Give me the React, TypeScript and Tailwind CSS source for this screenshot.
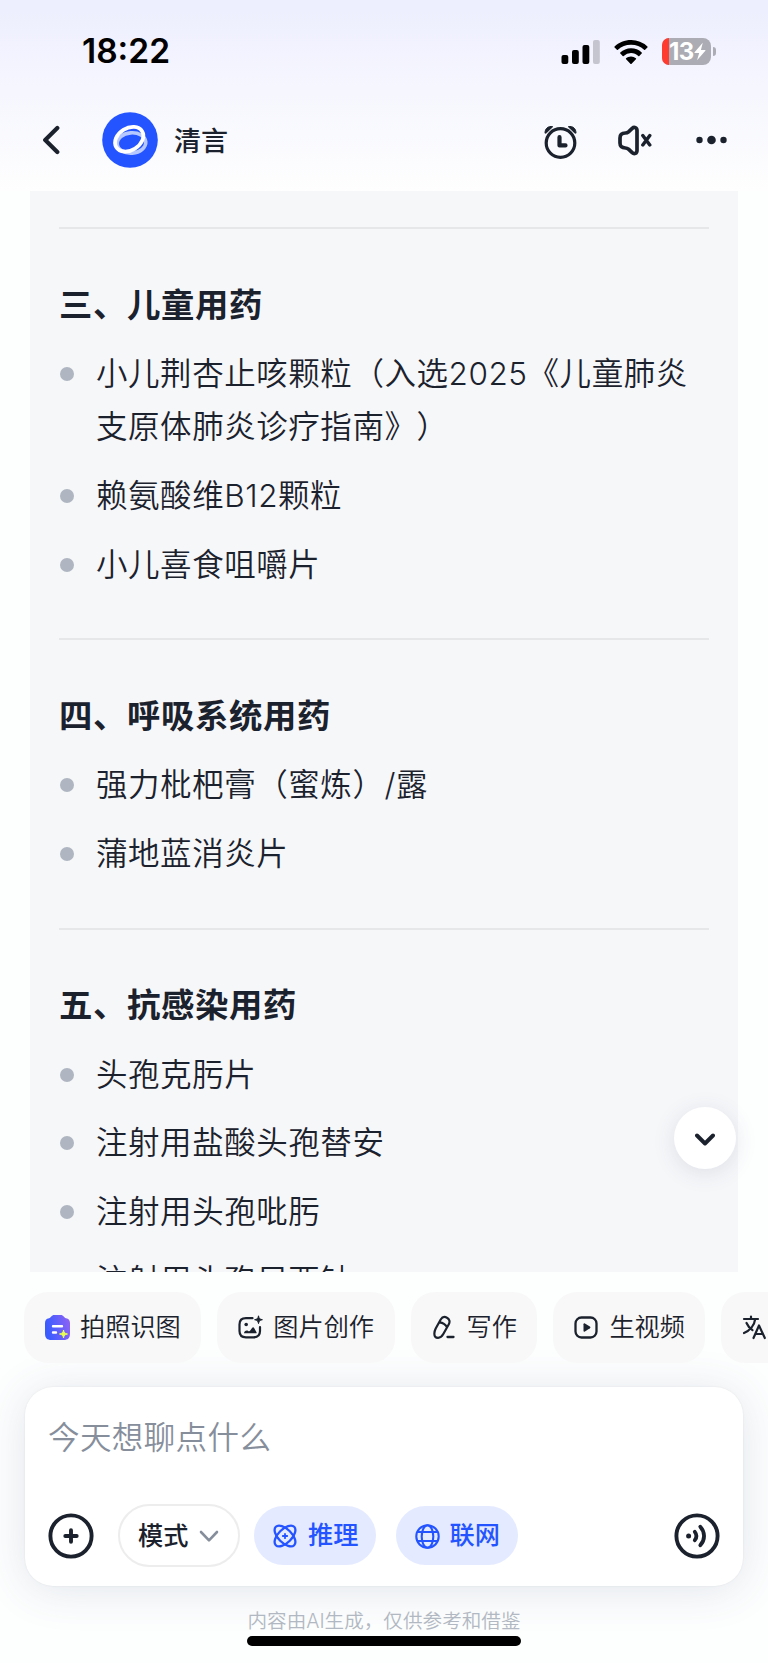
import type { ReactNode } from 'react';

interface Section {
  title: string;
  items: string[];
}

const sections: Section[] = [
  {
    title: '三、儿童用药',
    items: ['小儿荆杏止咳颗粒（入选2025《儿童肺炎支原体肺炎诊疗指南》）', '赖氨酸维B12颗粒', '小儿喜食咀嚼片'],
  },
  {
    title: '四、呼吸系统用药',
    items: ['强力枇杷膏（蜜炼）/露', '蒲地蓝消炎片'],
  },
  {
    title: '五、抗感染用药',
    items: ['头孢克肟片', '注射用盐酸头孢替安', '注射用头孢吡肟', '注射用头孢尼西钠'],
  },
];

function StatusBar() {
  return (
    <div className="flex h-[103px] items-center justify-between pl-[82px] pr-[52px]">
      <span className="text-[33.5px] font-semibold leading-none text-black">18:22</span>
      <div className="flex items-center">
        <svg width="39" height="24" viewBox="0 0 39 24" className="mr-[14px]">
          <rect x="0.500" y="15" width="6.800" height="9" rx="2" fill="#000" />
          <rect x="11" y="10" width="6.800" height="14" rx="2" fill="#000" />
          <rect x="21.500" y="5" width="6.800" height="19" rx="2" fill="#000" />
          <rect x="32" y="0" width="6.800" height="24" rx="2" fill="#c5c5d0" />
        </svg>
        <svg width="34" height="24" viewBox="0 0 34 24" className="mr-[14px]">
          <path d="M17 0C10.6 0 4.800 2.500.6 6.500a.7.7 0 0 0 0 1l2.300 2.300a.7.7 0 0 0 1 0A19 19 0 0 1 17 4.700a19 19 0 0 1 13.100 5.100.7.7 0 0 0 1 0l2.300-2.300a.7.7 0 0 0 0-1A23.700 23.700 0 0 0 17 0Z" />
          <path d="M17 8.300c-4.100 0-7.900 1.600-10.700 4.200a.7.7 0 0 0 0 1l2.400 2.400a.7.7 0 0 0 1 0A10.700 10.700 0 0 1 17 13c2.800 0 5.300 1.100 7.300 2.900a.7.700 0 0 0 1 0l2.400-2.400a.7.7 0 0 0 0-1A15.600 15.600 0 0 0 17 8.300Z" />
          <path d="M17 16.500c-1.900 0-3.600.7-4.900 1.800a.7.7 0 0 0 0 1l4.300 4.400a.8.8 0 0 0 1.200 0l4.300-4.400a.7.7 0 0 0 0-1A7.500 7.500 0 0 0 17 16.500Z" />
        </svg>
        <div className="flex h-[27px] w-[49px] items-center rounded-[8px] bg-[#acacb4]">
          <div className="h-full w-[7px] shrink-0 rounded-l-[8px] bg-[#ff3b30]" />
          <span className="text-[24px] font-bold leading-[27px] tracking-[-0.6px] text-white">13</span>
          <svg width="12" height="19" viewBox="0 0 13 19" className="shrink-0">
            <path d="M9.500 0 .6 10.200c-.3.400-.1.800.4.800h4.600L3.300 19l9-10.300c.3-.4.1-.8-.4-.8H7.500Z" fill="#fff" />
          </svg>
        </div>
        <div className="ml-[2px] h-[9px] w-[3px] rounded-r-full bg-[#acacb4]" />
      </div>
    </div>
  );
}

function Header() {
  return (
    <div className="flex h-[88px] items-start pl-[41.500px] pr-[40px]">
      <div className="flex h-[74px] items-center">
        <svg width="18" height="30" viewBox="0 0 18 30" fill="none">
          <path d="M15.300 3 3.200 15l12.100 12" stroke="#1b222d" strokeWidth="4.200" strokeLinecap="round" strokeLinejoin="round" />
        </svg>
        <svg width="56" height="56" viewBox="0 0 56 56" fill="none" className="ml-[42.500px]">
          <circle cx="28" cy="28" r="27.800" fill="#2454ff" />
          <ellipse cx="29.500" cy="31" rx="14.300" ry="10.200" transform="rotate(-5 29.500 31)" stroke="#b7c7ff" strokeWidth="3.600" />
          <ellipse cx="27.200" cy="27.200" rx="15.200" ry="11" transform="rotate(-32 27.200 27.200)" stroke="#fff" strokeWidth="3.800" />
        </svg>
        <span className="ml-[16px] mt-[2px] text-[27px] font-medium leading-none text-[#1b222d]">清言</span>
      </div>
      <div className="ml-auto flex h-[74px] items-center">
        <svg width="33" height="34" viewBox="0 0 33 34" fill="none" className="mt-[3px]">
          <path d="M1 8.200C.9 3.600 4.300.6 8.700 1.700L2.500 7.700ZM32 8.200C32.100 3.600 28.700.6 24.300 1.700l6.200 6Z" fill="#1b222d" stroke="#1b222d" strokeLinejoin="round" />
          <circle cx="16.500" cy="18" r="14.300" stroke="#1b222d" strokeWidth="3.200" />
          <path d="M15.500 12.200v8.200h6" stroke="#1b222d" strokeWidth="4.200" strokeLinecap="round" strokeLinejoin="round" />
        </svg>
        <svg width="34" height="31" viewBox="0 0 34 31" fill="none" className="ml-[41px]">
          <path d="M19 5.500v20c0 3-2.800 4-4.800 2.200L10.500 24.200C9.500 23.300 8.700 23 7.400 23 3.700 23 2 21.200 2 18v-5c0-3.200 1.700-5 5.400-5 1.300 0 2.100-.3 3.100-1.200l3.700-3.500C16.200 1.500 19 2.500 19 5.500Z" stroke="#1b222d" strokeWidth="3.700" strokeLinejoin="round" />
          <path d="m24.800 10.500 7 9.500m0-9.500-7 9.500" stroke="#1b222d" strokeWidth="3.400" strokeLinecap="round" />
        </svg>
        <svg width="32" height="10" viewBox="0 0 32 10" fill="#1b222d" className="ml-[44px]">
          <circle cx="3.500" cy="5" r="3.200" />
          <circle cx="15.500" cy="5" r="4.300" />
          <circle cx="27.500" cy="5" r="3.200" />
        </svg>
      </div>
    </div>
  );
}

function Chip({ icon, label }: { icon: ReactNode; label: string }) {
  return (
    <button className="flex h-[71px] shrink-0 items-center rounded-[24px] bg-[#f8f8f8] pl-[21px] pr-[20.500px] text-[25.2px] font-[350] text-[#1b222d]">
      <span className="mr-[10px] flex w-[25px] justify-center">{icon}</span>
      {label}
    </button>
  );
}

const chips = [
  {
    label: '拍照识图',
    icon: (
      <svg width="25" height="25" viewBox="0 0 25 25" className="shrink-0">
        <defs>
          <linearGradient id="camera" x1="0" y1="0.600" x2="1" y2="0.400">
            <stop offset="0.100" stopColor="#3a5cff" />
            <stop offset="1" stopColor="#8b62f5" />
          </linearGradient>
        </defs>
        <path d="M9.500 0h6c3.500 0 3.300 2.800 5.500 3.200 2.700.5 4 2 4 4.800V18.500c0 4.500-2 6.500-6.500 6.500h-12C2 25 0 23 0 18.500V8c0-2.800 1.300-4.300 4-4.800C6.200 2.800 6 0 9.500 0Z" fill="url(#camera)" />
        <path d="M8 11.200h9M8 17.500h3" stroke="#fff" strokeWidth="2.400" strokeLinecap="round" />
        <path d="M18.500 15c.6 2.700 1.300 3.400 4 4-2.700.6-3.400 1.300-4 4-.6-2.700-1.300-3.400-4-4 2.700-.6 3.400-1.300 4-4Z" fill="#e8ff4f" stroke="#e8ff4f" strokeLinejoin="round" />
      </svg>
    ),
  },
  {
    label: '图片创作',
    icon: (
      <svg width="25" height="25" viewBox="0 0 25 25" fill="none" className="shrink-0">
        <path d="M14.500 3.200H8c-4.500 0-6.500 2-6.500 6.300v6.500c0 4.300 2 6.300 6.500 6.300h7.500c4.500 0 6.500-2 6.500-6.300v-4" stroke="#1b222d" strokeWidth="2.200" strokeLinecap="round" />
        <circle cx="8.200" cy="9.500" r="1.800" fill="#1b222d" />
        <path d="M6 18.300c0-2 2.500-3.500 4.200-2.300 1 .7 1.500.2 2.200-.8l1.800-2.400c.6-.8 1.500-.7 1.900.1l2.400 4.300c.4.700 0 1.100-.6 1.100Z" fill="#1b222d" />
        <path d="M20.500.8c.5 2.700 1.200 3.400 3.900 3.900-2.700.5-3.400 1.200-3.900 3.900-.5-2.700-1.200-3.400-3.900-3.900 2.700-.5 3.400-1.200 3.900-3.900Z" fill="#1b222d" stroke="#1b222d" strokeLinejoin="round" />
      </svg>
    ),
  },
  {
    label: '写作',
    icon: (
      <svg width="25" height="25" viewBox="0 0 25 25" fill="none" className="shrink-0">
        <path d="M8.700 4.500C10.200 2 12.800 1.400 15 2.700c2.500 1.400 3.200 4 1.800 6.500L11.300 19c-1.400 2.500-2.900 3.800-5.200 3.800-2.600 0-3.900-1.500-3.700-4.500.1-2 .4-3 1.300-4.800ZM7.600 7.300c3.500.4 5.800 2 7.300 4.700" stroke="#1b222d" strokeWidth="2.200" strokeLinecap="round" strokeLinejoin="round" />
        <path d="M15.500 22h6" stroke="#1b222d" strokeWidth="2.300" strokeLinecap="round" />
      </svg>
    ),
  },
  {
    label: '生视频',
    icon: (
      <svg width="25" height="25" viewBox="0 0 25 25" fill="none" className="shrink-0">
        <rect x="1.500" y="2.500" width="21" height="20" rx="6" stroke="#1b222d" strokeWidth="2.300" />
        <path d="M9.500 9.200c0-.9.700-1.200 1.400-.8l5 3.200c.7.500.7 1.200 0 1.700l-5 3.200c-.7.400-1.400.1-1.400-.8Z" fill="#1b222d" />
      </svg>
    ),
  },
  {
    label: '翻译',
    icon: (
      <svg width="25" height="25" viewBox="0 0 25 25" fill="none" className="shrink-0">
        <path d="M2 4h14M9 1.500V4m4.200 0C12.500 10 8 15.500 2 18M4.500 8c1.500 3.500 3.500 5.500 6 7.200" stroke="#1b222d" strokeWidth="2.200" strokeLinecap="round" strokeLinejoin="round" />
        <path d="m11.500 23 5.500-12.500L22.800 23M13.500 19h7.500" stroke="#1b222d" strokeWidth="2.200" strokeLinecap="round" strokeLinejoin="round" />
      </svg>
    ),
  },
];

function InputCard() {
  return (
    <div className="mx-[25px] mt-[24px] flex h-[199px] flex-col rounded-[28px] bg-white px-[23px] shadow-[0_4px_44px_rgba(70,90,130,0.15),0_0_2px_rgba(0,0,0,0.08)]">
      <div className="mt-[25px] text-[31.5px] font-[350] leading-[52px] tracking-[0.4px] text-[#868e9c]">今天想聊点什么</div>
      <div className="mt-[40px] flex h-[63px] items-center">
        <svg width="46" height="46" viewBox="0 0 46 46" fill="none">
          <circle cx="23" cy="23" r="20.600" stroke="#1b222d" strokeWidth="3.900" />
          <path d="M23 17.300v11.400M17.300 23h11.400" stroke="#1b222d" strokeWidth="3.900" strokeLinecap="round" />
        </svg>
        <button className="ml-[24px] flex h-[63px] w-[122px] items-center rounded-full border-2 border-[#ededee] pl-[18px] pt-[2px] text-[25.2px] font-medium text-[#1b222d]">
          模式
          <svg width="20" height="13" viewBox="0 0 20 13" fill="none" className="ml-[10.5px]">
            <path d="m2 2 8 8.300L18 2" stroke="#868e9c" strokeWidth="2.600" strokeLinecap="round" strokeLinejoin="round" />
          </svg>
        </button>
        <button className="ml-[14px] flex h-[59px] w-[122px] items-center rounded-full bg-[#e4eaff] pl-[19px] pt-px text-[25.2px] font-medium text-[#2454ff]">
          <svg width="24" height="24" viewBox="0 0 24 24" fill="none" className="mr-[11px]" stroke="#2454ff" strokeWidth="2.300">
            <ellipse cx="12" cy="12" rx="13" ry="6.800" transform="rotate(45 12 12)" />
            <ellipse cx="12" cy="12" rx="13" ry="6.800" transform="rotate(-45 12 12)" />
            <path d="M12 9.800v4.400M9.800 12h4.400" strokeWidth="1.800" strokeLinecap="round" />
          </svg>
          推理
        </button>
        <button className="ml-[20px] flex h-[59px] w-[122px] items-center rounded-full bg-[#e4eaff] pl-[18.5px] pt-px text-[25.2px] font-medium text-[#2454ff]">
          <svg width="25" height="25" viewBox="0 0 25 25" fill="none" className="mr-[10px]" stroke="#2454ff" strokeWidth="2.100">
            <circle cx="12.500" cy="12.500" r="11.200" />
            <ellipse cx="12.500" cy="12.500" rx="5.800" ry="11.200" />
            <path d="M2.300 8h20.400M2.300 17h20.400" />
          </svg>
          联网
        </button>
        <svg width="46" height="46" viewBox="0 0 46 46" fill="none" className="ml-auto">
          <circle cx="23" cy="23" r="20.600" stroke="#1b222d" strokeWidth="3.900" />
          <circle cx="14.600" cy="23" r="2.500" fill="#1b222d" />
          <path d="M20.800 18.800c2 2.600 2 5.800 0 8.400M26.300 13.700c5 5.500 5 13.100 0 18.600" stroke="#1b222d" strokeWidth="3.800" strokeLinecap="round" />
        </svg>
      </div>
    </div>
  );
}

export default function App() {
  return (
    <div className="relative h-[1663px] w-[768px] overflow-hidden bg-[#fdfefe] font-['Inter','Noto_Sans_CJK_SC',sans-serif]">
      <div className="bg-linear-to-b from-[#edeefe] via-[#f6f7fe] to-[#fefefe]">
        <StatusBar />
        <Header />
      </div>

      <div className="ml-[30px] h-[1081px] w-[708px] overflow-hidden bg-[#f6f7f9] px-[29px] pt-[36px] text-[#1b222d]">
        {sections.map((s) => (
          <section key={s.title} className="border-t-2 border-[#e5e7e9] pb-[47.500px] pt-[49.500px]">
            <h2 className="mb-[15.500px] text-[33.4px] font-semibold leading-[53px] tracking-[0.6px]">{s.title}</h2>
            <ul className="flex flex-col gap-[15.500px]">
              {s.items.map((item) => (
                <li key={item} className="flex text-[31.500px] font-[350] leading-[53.200px] tracking-[0.55px] [text-spacing-trim:space-all]">
                  <span className="ml-[0.5px] mr-[22.500px] mt-[20px] size-[14px] shrink-0 rounded-full bg-[#afb6c1]" />
                  <span className="w-[620px] shrink-0">{item}</span>
                </li>
              ))}
            </ul>
          </section>
        ))}
      </div>

      <button className="absolute left-[674px] top-[1107px] flex size-[62px] items-center justify-center rounded-full bg-white shadow-[0_4px_22px_rgba(60,70,110,0.13)]">
        <svg width="22" height="14" viewBox="0 0 22 14" fill="none" className="mt-[3px]">
          <path d="m3 2.500 8 8 8-8" stroke="#1b222d" strokeWidth="3.900" strokeLinecap="round" strokeLinejoin="round" />
        </svg>
      </button>

      <div className="mt-[20px] flex gap-[16px] pl-[24px]">
        {chips.map((c) => (
          <Chip key={c.label} icon={c.icon} label={c.label} />
        ))}
      </div>

      <InputCard />

      <p className="mt-[20px] text-center text-[19.6px] font-[350] leading-[30px] text-[#b2b8c2]">内容由AI生成，仅供参考和借鉴</p>
      <div className="mx-auto h-[10px] w-[274px] rounded-full bg-black" />
    </div>
  );
}
